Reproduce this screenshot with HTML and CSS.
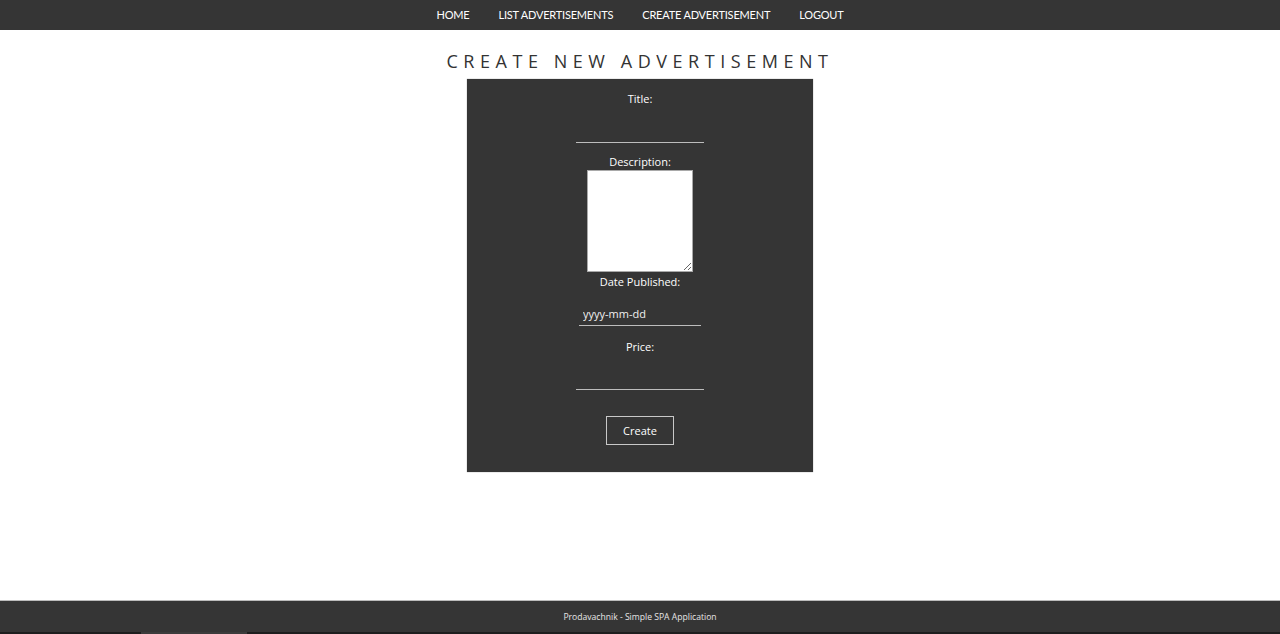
FILE: index.html
```html
<!DOCTYPE html>
<html lang="en">
<head>
<meta charset="utf-8">
<title>Prodavachnik</title>
<link rel="stylesheet" href="styles.css">
</head>
<body>
<nav class="menu">
  <a href="#" class="menu-link">Home</a>
  <a href="#" class="menu-link">List Advertisements</a>
  <a href="#" class="menu-link">Create Advertisement</a>
  <a href="#" class="menu-link">Logout</a>
</nav>
<main class="content">
  <h1 class="page-title">Create new Advertisement</h1>
  <form class="ad-form">
    <label class="field-label">Title:</label>
    <input class="line-input" type="text">
    <label class="field-label label-desc">Description:</label>
    <textarea class="desc-area"></textarea>
    <label class="field-label label-date">Date Published:</label>
    <input class="line-input date-input" type="text" value="yyyy-mm-dd">
    <label class="field-label label-price">Price:</label>
    <input class="line-input price-input" type="text">
    <button class="create-btn" type="button">Create</button>
  </form>
</main>
<footer class="footer">
  <div class="footer-text">Prodavachnik - Simple SPA Application</div>
  <div class="footer-strip">
    <span class="strip-dark strip-left"></span>
    <span class="strip-thumb"></span>
    <span class="strip-dark strip-rest"></span>
  </div>
</footer>
</body>
</html>
```
FILE: styles.css
```css
html, body {
  margin: 0;
  padding: 0;
  height: 100%;
}
body {
  display: flex;
  flex-direction: column;
  min-height: 100vh;
  background: #ffffff;
  font-family: "Open Sans", "Liberation Sans", sans-serif;
}
.menu {
  height: 30px;
  background: #353535;
  display: flex;
  justify-content: center;
  align-items: center;
  gap: 29px;
}
.menu-link {
  font-family: Lato, "Open Sans", sans-serif;
  font-size: 11px;
  letter-spacing: -0.2px;
  text-transform: uppercase;
  color: #ffffff;
  text-decoration: none;
  line-height: 30px;
}
.content {
  flex: 1;
  display: flex;
  flex-direction: column;
  align-items: center;
}
.page-title {
  margin: 19px 0 6px 0;
  font-size: 18px;
  line-height: 24px;
  font-weight: 400;
  text-transform: uppercase;
  letter-spacing: 0.308em;
  color: #333333;
  padding-left: 0;
}
.ad-form {
  width: 346px;
  height: 393px;
  box-sizing: border-box;
  background: #353535;
  box-shadow: 0 0 1px #8a8a8a;
  display: flex;
  flex-direction: column;
  align-items: center;
  padding-top: 12px;
}
.field-label {
  font-size: 11px;
  line-height: 16px;
  color: #ffffff;
}
.line-input {
  box-sizing: border-box;
  width: 128px;
  height: 24px;
  margin-top: 12px;
  background: transparent;
  border: none;
  border-bottom: 1px solid #bdbdbd;
  color: #f0f0f0;
  font-family: "Open Sans", sans-serif;
  font-size: 11px;
  padding: 0 4px;
  outline: none;
}
.label-desc {
  margin-top: 11px;
}
.desc-area {
  box-sizing: border-box;
  width: 106px;
  height: 102px;
  margin: 0;
  border: 1px solid #a9a9a9;
  background: #ffffff;
  resize: both;
}
.label-date {
  margin-top: 2px;
}
.date-input {
  width: 122px;
  margin-top: 12px;
}
.label-price {
  margin-top: 13px;
}
.price-input {
  margin-top: 11px;
}
.create-btn {
  margin-top: 26px;
  width: 68px;
  height: 29px;
  background: transparent;
  border: 1px solid #c8c8c8;
  color: #ffffff;
  font-family: "Open Sans", sans-serif;
  font-size: 11px;
  cursor: pointer;
}
.footer {
  background: #353535;
  border-top: 1px solid #bcbcbc;
  display: flex;
  flex-direction: column;
}
.footer-text {
  height: 31px;
  line-height: 33px;
  text-align: center;
  font-size: 8.6px;
  color: #e6e6e6;
}
.footer-strip {
  display: flex;
  height: 2px;
}
.strip-dark {
  background: #1e1e1e;
}
.strip-left {
  width: 141px;
}
.strip-thumb {
  width: 106px;
  background: #3c3c3c;
}
.strip-rest {
  flex: 1;
}
```
